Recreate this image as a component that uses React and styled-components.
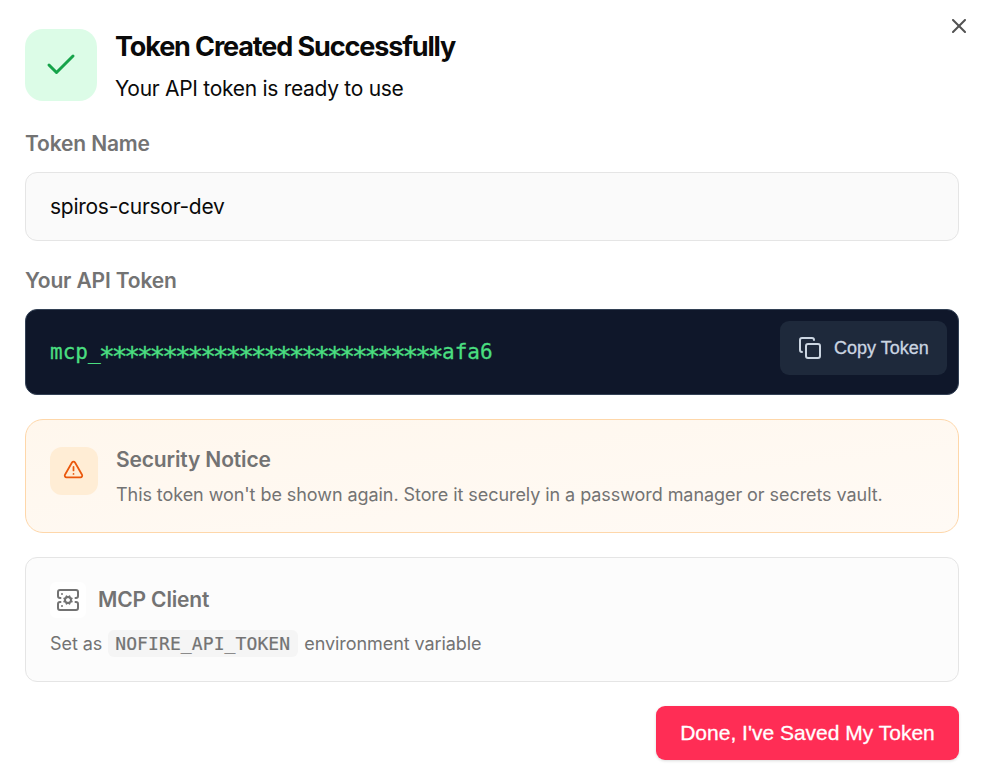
import { Check, Copy, ServerCog, TriangleAlert, X } from "lucide-react";
import styled, { createGlobalStyle } from "styled-components";

const GlobalStyle = createGlobalStyle`
  * {
    box-sizing: border-box;
  }
  body {
    margin: 0;
    background-color: #fff;
    color: #0a0a0a;
    font-family: Inter, sans-serif;
  }
  h1, h2, p {
    margin: 0;
  }
`;

const Dialog = styled.main`
  position: relative;
  display: flex;
  flex-direction: column;
  gap: 24px;
  width: 981px;
  height: 782px;
  padding: 29px 22px 22px 25px;
`;

const CloseButton = styled.button`
  position: absolute;
  top: 14px;
  right: 10px;
  display: flex;
  padding: 0;
  border: none;
  background: none;
  color: #0a0a0a;
  opacity: 0.7;
  cursor: pointer;
`;

const Header = styled.header`
  display: flex;
  gap: 18px;
  height: 72px;
  margin-bottom: 3px;
`;

const SuccessIcon = styled.div`
  display: flex;
  align-items: center;
  justify-content: center;
  width: 72px;
  height: 72px;
  border-radius: 18px;
  background-color: #dcfce7;
  color: #16a34a;
`;

const Title = styled.h1`
  font-size: 27px;
  line-height: 36px;
  font-weight: 700;
  letter-spacing: -1.13px;
  white-space: nowrap;
`;

const Subtitle = styled.p`
  margin-top: 8px;
  font-size: 21px;
  line-height: 32px;
  letter-spacing: -0.29px;
`;

const Field = styled.section`
  display: flex;
  flex-direction: column;
  gap: 12px;
`;

const Label = styled.h2`
  font-size: 21px;
  line-height: 32px;
  font-weight: 600;
  letter-spacing: -0.15px;
  color: #737373;
`;

const NameBox = styled.div`
  display: flex;
  align-items: center;
  height: 69px;
  padding: 0 24px;
  border: 1px solid #e5e5e5;
  border-radius: 12px;
  background-color: #fafafa;
  font-size: 21px;
  letter-spacing: -0.27px;
`;

const TokenBox = styled.div`
  display: flex;
  justify-content: space-between;
  height: 86px;
  padding: 11px 11px 11px 24px;
  border: 1px solid #334155;
  border-radius: 12px;
  background-color: #0f172a;

  code {
    align-self: center;
    font: 400 21px/32px "DejaVu Sans Mono", monospace;
    color: #4ade80;
    -webkit-text-stroke: 0.3px;
  }
`;

// larger asterisks, lowered to the middle of the line
const Mask = styled.span`
  font-size: 27px;
  line-height: 0;
  letter-spacing: -3.61px;
  vertical-align: -7px;
  margin-left: -1.8px;
  margin-right: 1.8px;
`;

const CopyButton = styled.button`
  display: flex;
  align-items: center;
  gap: 12px;
  width: 167px;
  height: 54px;
  padding: 0 18px;
  border: none;
  border-radius: 9px;
  background-color: #1e293b;
  color: #cbd5e1;
  font: 400 18px "Liberation Sans", Arial, sans-serif;
  -webkit-text-stroke: 0.3px;
  white-space: nowrap;
  cursor: pointer;
`;

const Notice = styled.section`
  display: flex;
  gap: 18px;
  height: 114px;
  padding: 24px;
  border: 1px solid #fed7aa;
  border-radius: 18px;
  background: linear-gradient(to bottom right, #fff7ed, #fffaf5);
`;

const WarningIcon = styled.div`
  display: flex;
  align-items: center;
  justify-content: center;
  width: 48px;
  height: 48px;
  margin-top: 3px;
  padding: 0 1px 4px 0;
  border-radius: 12px;
  background-color: #ffedd5;
  color: #ea580c;
`;

const Text = styled.p`
  margin-top: ${({ $top }) => $top}px;
  font-size: 18px;
  line-height: 27px;
  letter-spacing: -0.065px;
  color: #737373;
  white-space: nowrap;

  code {
    padding: 3px 8px 3px 7px;
    margin: 0 1px;
    border-radius: 6px;
    background-color: #f5f5f5;
    font: 400 18px "DejaVu Sans Mono", monospace;
    letter-spacing: 0.1px;
    -webkit-text-stroke: 0.2px;
  }
`;

const ClientCard = styled.section`
  height: 125px;
  padding: 24px;
  border: 1px solid #e5e5e5;
  border-radius: 12px;
  background-color: #fcfcfc;
`;

const ClientHeader = styled.div`
  display: flex;
  align-items: center;
  gap: 12px;
`;

const ClientIcon = styled.div`
  display: flex;
  align-items: center;
  justify-content: center;
  width: 36px;
  height: 36px;
  border-radius: 6px;
  background-color: #fff;
  color: #737373;
`;

const DoneButton = styled.button`
  align-self: flex-end;
  width: 303px;
  height: 54px;
  padding: 0;
  border: none;
  border-radius: 9px;
  background-color: #ff2d55;
  box-shadow: 0 1px 3px rgba(0, 0, 0, 0.14);
  color: #fff;
  font: 400 21px "Liberation Sans", Arial, sans-serif;
  -webkit-text-stroke: 0.3px;
  cursor: pointer;
`;

const App = () => {
  return (
    <>
      <GlobalStyle />
      <Dialog>
        <CloseButton aria-label="Close">
          <X size={24} />
        </CloseButton>

        <Header>
          <SuccessIcon>
            <Check size={36} />
          </SuccessIcon>
          <div>
            <Title>Token Created Successfully</Title>
            <Subtitle>Your API token is ready to use</Subtitle>
          </div>
        </Header>

        <Field>
          <Label>Token Name</Label>
          <NameBox>spiros-cursor-dev</NameBox>
        </Field>

        <Field>
          <Label>Your API Token</Label>
          <TokenBox>
            <code>
              mcp_<Mask>{"*".repeat(27)}</Mask>afa6
            </code>
            <CopyButton>
              <Copy size={24} />
              Copy Token
            </CopyButton>
          </TokenBox>
        </Field>

        <Notice>
          <WarningIcon>
            <TriangleAlert size={21} />
          </WarningIcon>
          <div>
            <Label>Security Notice</Label>
            <Text $top={5}>
              This token won't be shown again. Store it securely in a password
              manager or secrets vault.
            </Text>
          </div>
        </Notice>

        <ClientCard>
          <ClientHeader>
            <ClientIcon>
              <ServerCog size={24} />
            </ClientIcon>
            <Label>MCP Client</Label>
          </ClientHeader>
          <Text $top={12}>
            Set as <code>NOFIRE_API_TOKEN</code> environment variable
          </Text>
        </ClientCard>

        <DoneButton>Done, I've Saved My Token</DoneButton>
      </Dialog>
    </>
  );
};

export default App;
